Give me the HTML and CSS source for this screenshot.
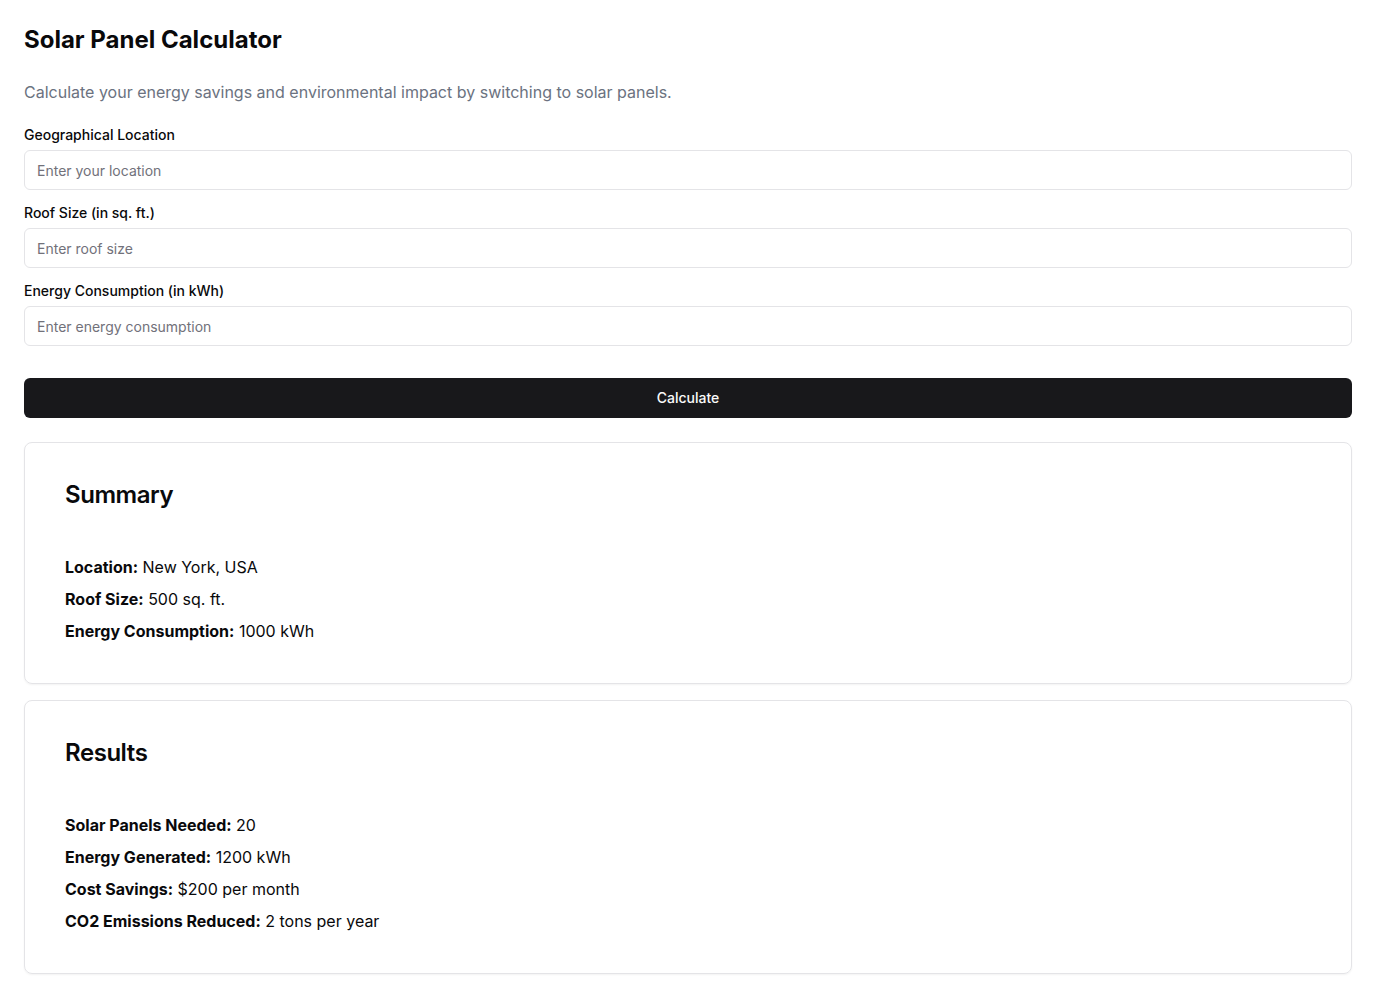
FILE: index.html
```html
<!DOCTYPE html>
<html lang="en">
<head>
<meta charset="utf-8">
<title>Solar Panel Calculator</title>
<link rel="stylesheet" href="styles.css">
</head>
<body>
<main class="page">
  <h1 class="title">Solar Panel Calculator</h1>
  <p class="subtitle">Calculate your energy savings and environmental impact by switching to solar panels.</p>
  <form class="form">
    <div class="field">
      <label class="label" for="loc">Geographical Location</label>
      <input class="input" id="loc" type="text" placeholder="Enter your location">
    </div>
    <div class="field">
      <label class="label" for="roof">Roof Size (in sq. ft.)</label>
      <input class="input" id="roof" type="text" placeholder="Enter roof size">
    </div>
    <div class="field">
      <label class="label" for="energy">Energy Consumption (in kWh)</label>
      <input class="input" id="energy" type="text" placeholder="Enter energy consumption">
    </div>
    <button class="button" type="button">Calculate</button>
  </form>
  <section class="card card-first">
    <h2 class="card-title">Summary</h2>
    <div class="card-body">
      <p class="item"><strong>Location:</strong> New York, USA</p>
      <p class="item"><strong>Roof Size:</strong> 500 sq. ft.</p>
      <p class="item"><strong>Energy Consumption:</strong> 1000 kWh</p>
    </div>
  </section>
  <section class="card">
    <h2 class="card-title">Results</h2>
    <div class="card-body">
      <p class="item"><strong>Solar Panels Needed:</strong> 20</p>
      <p class="item"><strong>Energy Generated:</strong> 1200 kWh</p>
      <p class="item"><strong>Cost Savings:</strong> $200 per month</p>
      <p class="item"><strong>CO2 Emissions Reduced:</strong> 2 tons per year</p>
    </div>
  </section>
</main>
</body>
</html>
```
FILE: styles.css
```css
* { box-sizing: border-box; }
html, body { margin: 0; padding: 0; background: #ffffff; }
body {
  font-family: Inter, "Noto Sans", sans-serif;
  color: #09090b;
}
.page {
  padding: 24px;
  display: flex;
  flex-direction: column;
}
.title {
  margin: 0;
  font-size: 24px;
  line-height: 32px;
  font-weight: 700;
}
.subtitle {
  margin: 24px 0 21px;
  font-size: 16px;
  line-height: 24px;
  color: #6b7280;
}
.form {
  display: flex;
  flex-direction: column;
  gap: 13px;
}
.field {
  display: flex;
  flex-direction: column;
  gap: 5px;
}
.label {
  font-size: 14px;
  line-height: 20px;
  font-weight: 500;
}
.input {
  height: 40px;
  width: 100%;
  border: 1px solid #e4e4e7;
  border-radius: 6px;
  padding: 0 12px;
  font-family: inherit;
  font-size: 14px;
  color: #09090b;
  background: #fff;
}
.input::placeholder { color: #71717a; }
.button {
  margin-top: 19px;
  height: 40px;
  width: 100%;
  border: 0;
  border-radius: 6px;
  background: #18181b;
  color: #fafafa;
  font-family: inherit;
  font-size: 14px;
  font-weight: 500;
  padding: 0 16px 2px;
}
.card {
  margin-top: 16px;
  border: 1px solid #e4e4e7;
  border-radius: 8px;
  padding: 40px;
  box-shadow: 0 1px 2px rgba(0,0,0,0.05);
}
.card-first { margin-top: 24px; }
.card-title {
  margin: 0;
  font-size: 24px;
  line-height: 24px;
  font-weight: 600;
  letter-spacing: -0.45px;
}
.card-body {
  margin-top: 48px;
  display: flex;
  flex-direction: column;
  gap: 8px;
}
.item {
  margin: 0;
  font-size: 16px;
  line-height: 24px;
}
.item strong { font-weight: 700; }
```
